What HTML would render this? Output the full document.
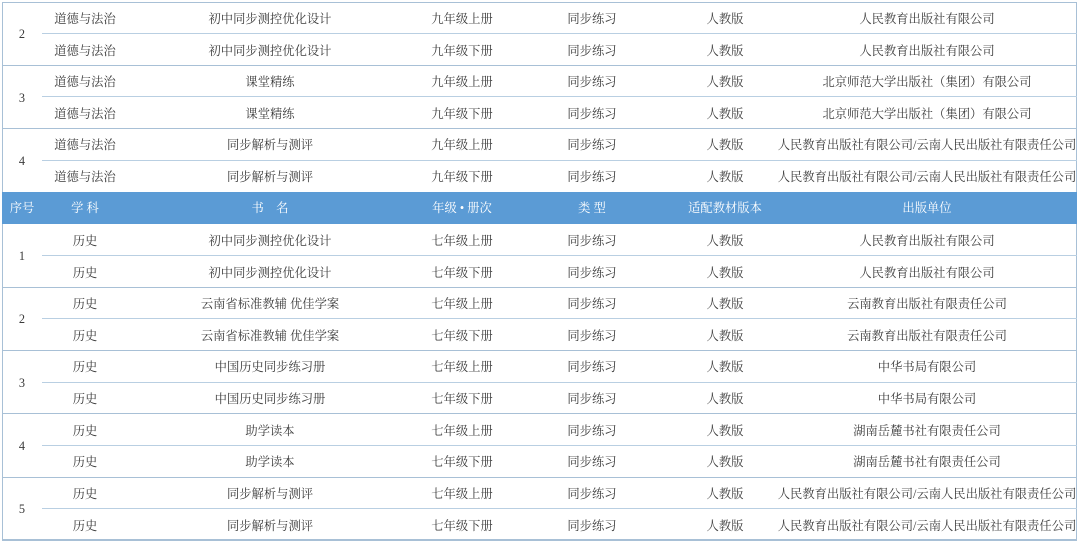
<!DOCTYPE html>
<html><head><meta charset="utf-8"><style>
html,body{margin:0;padding:0;background:#fff;}
body{width:1080px;height:542px;position:relative;overflow:hidden;font-family:"Liberation Serif","Noto Serif CJK SC",serif;font-size:12.3px;color:#3a3a3a;}
.r{position:absolute;left:0;width:1080px;height:32px;}
.r span{position:absolute;top:0;line-height:34px;text-align:center;white-space:nowrap;}
.hd .r span{line-height:32px;}
.a{left:40px;width:90px}.b{left:170px;width:200px}.c{left:412px;width:100px}.d{left:542px;width:100px}.e{left:675px;width:100px}.f{left:767px;width:320px}
.n{position:absolute;left:2px;width:40px;text-align:center;line-height:20px;}
.hl{position:absolute;height:1px;background:#b9cfe2;}
.g{left:2px;width:1075px;background:#a8c0d6;}
.i{left:42px;width:1035px;}
.v{position:absolute;top:2px;width:1px;height:538px;background:#a8c0d6;}
.hd{position:absolute;left:2px;width:1075px;top:192px;height:32px;background:#5b9bd5;color:#fff;}
</style></head><body>
<div class="v" style="left:2px"></div><div class="v" style="left:1076px"></div>
<div class="hl g" style="top:2px"></div>

<div class="r" style="top:2px"><span class="a">道德与法治</span><span class="b">初中同步测控优化设计</span><span class="c">九年级上册</span><span class="d">同步练习</span><span class="e">人教版</span><span class="f">人民教育出版社有限公司</span></div>
<div class="hl i" style="top:33px"></div>
<div class="r" style="top:34px"><span class="a">道德与法治</span><span class="b">初中同步测控优化设计</span><span class="c">九年级下册</span><span class="d">同步练习</span><span class="e">人教版</span><span class="f">人民教育出版社有限公司</span></div>
<div class="n" style="top:24px">2</div>
<div class="hl g" style="top:65px"></div>
<div class="r" style="top:65px"><span class="a">道德与法治</span><span class="b">课堂精练</span><span class="c">九年级上册</span><span class="d">同步练习</span><span class="e">人教版</span><span class="f">北京师范大学出版社（集团）有限公司</span></div>
<div class="hl i" style="top:96px"></div>
<div class="r" style="top:97px"><span class="a">道德与法治</span><span class="b">课堂精练</span><span class="c">九年级下册</span><span class="d">同步练习</span><span class="e">人教版</span><span class="f">北京师范大学出版社（集团）有限公司</span></div>
<div class="n" style="top:88px">3</div>
<div class="hl g" style="top:128px"></div>
<div class="r" style="top:128px"><span class="a">道德与法治</span><span class="b">同步解析与测评</span><span class="c">九年级上册</span><span class="d">同步练习</span><span class="e">人教版</span><span class="f">人民教育出版社有限公司/云南人民出版社有限责任公司</span></div>
<div class="hl i" style="top:160px"></div>
<div class="r" style="top:160px"><span class="a">道德与法治</span><span class="b">同步解析与测评</span><span class="c">九年级下册</span><span class="d">同步练习</span><span class="e">人教版</span><span class="f">人民教育出版社有限公司/云南人民出版社有限责任公司</span></div>
<div class="n" style="top:151px">4</div>

<div class="hd"><div class="r" style="top:0;left:-2px"><span style="left:0;width:44px">序号</span><span class="a">学 科</span><span class="b">书&nbsp;&nbsp;&nbsp;&nbsp;名</span><span class="c">年级 • 册次</span><span class="d">类 型</span><span class="e">适配教材版本</span><span class="f">出版单位</span></div></div>

<div class="r" style="top:224px"><span class="a">历史</span><span class="b">初中同步测控优化设计</span><span class="c">七年级上册</span><span class="d">同步练习</span><span class="e">人教版</span><span class="f">人民教育出版社有限公司</span></div>
<div class="hl i" style="top:255px"></div>
<div class="r" style="top:256px"><span class="a">历史</span><span class="b">初中同步测控优化设计</span><span class="c">七年级下册</span><span class="d">同步练习</span><span class="e">人教版</span><span class="f">人民教育出版社有限公司</span></div>
<div class="n" style="top:246px">1</div>
<div class="hl g" style="top:287px"></div>
<div class="r" style="top:287px"><span class="a">历史</span><span class="b">云南省标准教辅 优佳学案</span><span class="c">七年级上册</span><span class="d">同步练习</span><span class="e">人教版</span><span class="f">云南教育出版社有限责任公司</span></div>
<div class="hl i" style="top:318px"></div>
<div class="r" style="top:319px"><span class="a">历史</span><span class="b">云南省标准教辅 优佳学案</span><span class="c">七年级下册</span><span class="d">同步练习</span><span class="e">人教版</span><span class="f">云南教育出版社有限责任公司</span></div>
<div class="n" style="top:309px">2</div>
<div class="hl g" style="top:350px"></div>
<div class="r" style="top:350px"><span class="a">历史</span><span class="b">中国历史同步练习册</span><span class="c">七年级上册</span><span class="d">同步练习</span><span class="e">人教版</span><span class="f">中华书局有限公司</span></div>
<div class="hl i" style="top:382px"></div>
<div class="r" style="top:382px"><span class="a">历史</span><span class="b">中国历史同步练习册</span><span class="c">七年级下册</span><span class="d">同步练习</span><span class="e">人教版</span><span class="f">中华书局有限公司</span></div>
<div class="n" style="top:373px">3</div>
<div class="hl g" style="top:413px"></div>
<div class="r" style="top:414px"><span class="a">历史</span><span class="b">助学读本</span><span class="c">七年级上册</span><span class="d">同步练习</span><span class="e">人教版</span><span class="f">湖南岳麓书社有限责任公司</span></div>
<div class="hl i" style="top:445px"></div>
<div class="r" style="top:445px"><span class="a">历史</span><span class="b">助学读本</span><span class="c">七年级下册</span><span class="d">同步练习</span><span class="e">人教版</span><span class="f">湖南岳麓书社有限责任公司</span></div>
<div class="n" style="top:436px">4</div>
<div class="hl g" style="top:477px"></div>
<div class="r" style="top:477px"><span class="a">历史</span><span class="b">同步解析与测评</span><span class="c">七年级上册</span><span class="d">同步练习</span><span class="e">人教版</span><span class="f">人民教育出版社有限公司/云南人民出版社有限责任公司</span></div>
<div class="hl i" style="top:508px"></div>
<div class="r" style="top:509px"><span class="a">历史</span><span class="b">同步解析与测评</span><span class="c">七年级下册</span><span class="d">同步练习</span><span class="e">人教版</span><span class="f">人民教育出版社有限公司/云南人民出版社有限责任公司</span></div>
<div class="n" style="top:499px">5</div>
<div class="hl g" style="top:539px;height:2px"></div>
</body></html>
